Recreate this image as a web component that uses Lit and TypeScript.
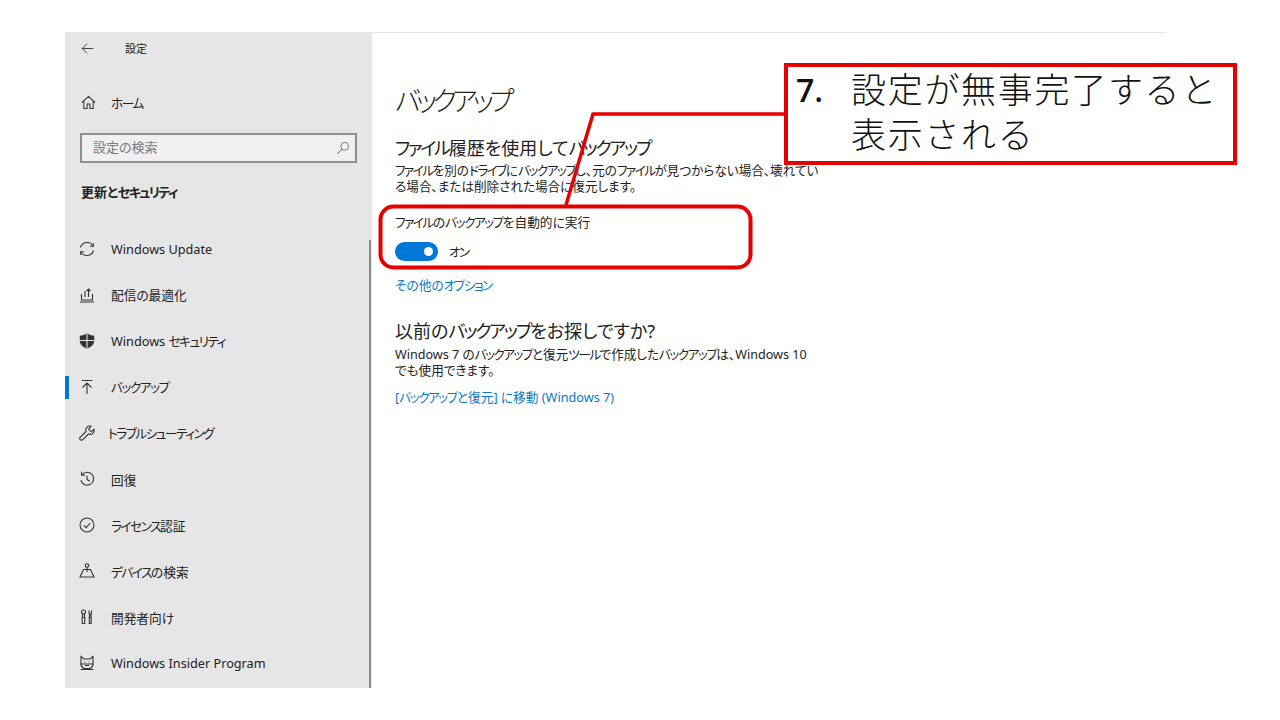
import { LitElement, html, css, svg } from 'lit';
import { customElement } from 'lit/decorators.js';

const icon = (body: unknown) => html`<svg class="icon" viewBox="0 0 16 16" fill="none" stroke="currentColor" stroke-width="1.1">${body}</svg>`;

// katakana runs are set tighter, the reference font has narrow kana
const k = (text: string) => html`<span class="kana">${text}</span>`;

const navItems = [
  { label: html`Windows Update`, icon: icon(svg`<path d="M1.5 6.5A6.8 6.8 0 0 1 14 5M14.5 9.5A6.8 6.8 0 0 1 2 11"/><path d="M14.3 2v3.2h-3.2M1.7 14v-3.2h3.2"/>`) },
  { label: html`配信の最適化`, icon: icon(svg`<path d="M2.5 7v6h11V7M1 15h14M6 4v6M9.5 2v8M7.5 4l2-2 2 2"/>`) },
  { label: html`Windows ${k('セキュリティ')}`, icon: icon(svg`<path fill="currentColor" stroke="none" d="M8 .3c2 1.4 4.700 2.200 7.200 2.400v5c0 3.800-3 6.300-7.200 7.800-4.200-1.500-7.200-4-7.200-7.800v-5C3.300 2.500 6 1.700 8 .3z"/><path stroke="#e6e6e6" d="M8 .3v15.200M.8 7.500h14.400"/>`) },
  { label: k('バックアップ'), active: true, icon: icon(svg`<path d="M3 1.500h10M8 15V4M3.500 8.500 8 4l4.500 4.500"/>`) },
  { label: k('トラブルシューティング'), tight: true, icon: icon(svg`<path d="M15 4.200 12.300 6.800 9.600 4.100 12 1.300a4 4 0 0 0-5 5.200L1.300 12.200a1.700 1.700 0 0 0 2.500 2.500L9.500 9a4 4 0 0 0 5.500-4.800z"/>`) },
  { label: html`回復`, icon: icon(svg`<path d="M3.200 3.500A6.500 6.500 0 1 1 1.800 9"/><path d="M2.600.8v3.300h3.300M8 4.500V8.500l2.800 1.800"/>`) },
  { label: html`${k('ライセンス')}認証`, icon: icon(svg`<circle cx="8" cy="8" r="7"/><path d="m4.800 8.300 2.300 2.300 4.200-4.600"/>`) },
  { label: html`${k('デバイス')}の検索`, icon: icon(svg`<circle cx="8" cy="2.500" r="1.700"/><path d="M8 4.200V9M4.500 6.500h7L15 14H1z"/>`) },
  { label: html`開発者向け`, icon: icon(svg`<circle cx="4.500" cy="3" r="2"/><path d="M3.500 5v3.500h2V5M3.200 8.500h2.600v6H3.200zM10 1.500v3l1.200 1 1.300-1v-3M10.500 5.500v3h1.500v-3M10.300 8.500h1.900v6h-1.900z"/>`) },
  { label: html`Windows Insider Program`, icon: icon(svg`<path d="M2 1.500 5 4h6l3-2.500V9a5 5 0 0 1-3 4.500H5A5 5 0 0 1 2 9z"/><path d="M1.500 9h13M1.500 14.500h13M5.500 7h.8M9.700 7h.8M6 10.500h4"/>`) },
];

@customElement('app-root')
export class AppRoot extends LitElement {
  static styles = css`
    :host {
      display: block;
      position: relative;
      width: 1280px;
      height: 720px;
      background: #fff;
      overflow: hidden;
      font-family: "Noto Sans", "Noto Sans CJK JP", sans-serif;
      font-feature-settings: "palt";
      color: #222;
    }

    .kana {
      letter-spacing: -0.12em;
    }

    .window {
      display: flex;
      width: 1101px;
      height: 656px;
      margin-left: 65px;
      padding-top: 32px;
    }

    .sidebar {
      position: relative;
      flex: none;
      width: 307px;
      height: 656px;
      background: #e6e6e6;
      font-size: 12.700px;
    }

    .scrollbar {
      position: absolute;
      right: 1px;
      top: 208px;
      bottom: 0;
      width: 2px;
      background: #8c8c8c;
    }

    .icon {
      flex: none;
      width: 16px;
      height: 16px;
      color: #333;
    }

    .back {
      display: flex;
      align-items: center;
      gap: 31px;
      height: 32px;
      padding-left: 16px;
      font-size: 11px;
    }

    .back .icon {
      width: 13px;
      height: 13px;
    }

    .home {
      display: flex;
      align-items: center;
      gap: 15px;
      height: 32px;
      margin-top: 22px;
      padding-left: 16px;
    }

    .home .icon {
      width: 15px;
      height: 15px;
    }

    .search {
      display: flex;
      align-items: center;
      justify-content: space-between;
      box-sizing: border-box;
      width: 277px;
      height: 30px;
      margin: 15px 0 0 15px;
      padding: 0 5px 3px 11px;
      border: 2px solid #8f8f8f;
      background: #f0f0f0;
      color: #7a7a7a;
      font-size: 13px;
    }

    .search .icon {
      width: 14px;
      height: 14px;
      margin-top: 3px;
      color: #777;
    }

    .section {
      height: 32px;
      margin: 13px 0 0 16px;
      line-height: 32px;
      font-size: 13px;
      font-weight: 700;
    }

    .nav {
      margin-top: 17.500px;
    }

    .item {
      position: relative;
      display: flex;
      align-items: center;
      gap: 16px;
      height: 46.100px;
      padding-left: 14px;
    }

    .item.tight {
      gap: 13px;
    }

    .item.active::before {
      content: "";
      position: absolute;
      left: 0;
      top: 12px;
      width: 4px;
      height: 23px;
      background: #0078d7;
    }

    .main {
      flex: 1;
      height: 656px;
      box-sizing: border-box;
      padding: 50px 0 0 23px;
      border-top: 1px solid #e6e6e6;
    }

    h1 {
      margin: 0;
      font-size: 27px;
      font-weight: 300;
      line-height: 36px;
    }

    h1 .kana {
      letter-spacing: -0.17em;
    }

    h2 {
      margin: 0;
      font-size: 18px;
      font-weight: 400;
      line-height: 24px;
    }

    .first {
      margin-top: 17px;
    }

    p {
      margin: 0;
      font-size: 12.600px;
      line-height: 16px;
    }

    .desc {
      margin-top: 3px;
    }

    .label {
      margin-top: 18px;
      font-size: 12.700px;
      line-height: 18px;
    }

    .toggle-row {
      display: flex;
      align-items: center;
      gap: 11px;
      height: 20px;
      margin-top: 10px;
      font-size: 12.500px;
    }

    .toggle {
      display: flex;
      align-items: center;
      justify-content: flex-end;
      box-sizing: border-box;
      width: 43px;
      height: 19px;
      padding-right: 5px;
      border-radius: 10px;
      background: #0078d7;
    }

    .knob {
      width: 9px;
      height: 9px;
      border-radius: 50%;
      background: #fff;
    }

    a {
      display: block;
      color: #0a78c8;
      text-decoration: none;
      font-size: 12.700px;
      line-height: 18px;
    }

    .more {
      margin-top: 15px;
    }

    .second {
      margin-top: 25px;
    }

    .note {
      margin-top: 4px;
    }

    .go {
      margin-top: 9px;
    }

    .overlay {
      position: absolute;
      left: 0;
      top: 0;
      width: 1280px;
      height: 720px;
      pointer-events: none;
    }

    .callout {
      position: absolute;
      left: 784px;
      top: 63px;
      box-sizing: border-box;
      display: flex;
      width: 453px;
      height: 102px;
      padding: 0 0 0 8px;
      border: 4px solid #e60000;
      background: #fff;
      font-size: 35px;
      line-height: 45px;
      color: #111;
      font-feature-settings: normal;
    }

    .num {
      flex: none;
      width: 55px;
      font-family: "Open Sans", sans-serif;
      font-weight: 600;
      font-size: 32px;
    }

    .text {
      letter-spacing: 1.700px;
      font-weight: 300;
      white-space: nowrap;
    }
  `;

  render() {
    return html`
      <div class="window">
        <aside class="sidebar">
          <div class="back">
            ${icon(svg`<path d="M15 8H1.500M7.500 2 1.500 8l6 6"/>`)}
            <span>設定</span>
          </div>
          <div class="home">
            ${icon(svg`<path d="M1 8 8 1.500 15 8M3 6.500V14.500h3.500V9.500h3v5H13V6.500"/>`)}
            ${k('ホーム')}
          </div>
          <div class="search">
            <span>設定の検索</span>
            ${icon(svg`<circle cx="10" cy="6" r="4.500"/><path d="M6.800 9.200 1.500 14.500"/>`)}
          </div>
          <div class="section">更新と${k('セキュリティ')}</div>
          <nav class="nav">
            ${navItems.map((item) => html`
              <div class="item ${item.active ? 'active' : ''} ${item.tight ? 'tight' : ''}">
                ${item.icon}
                <span>${item.label}</span>
              </div>
            `)}
          </nav>
          <div class="scrollbar"></div>
        </aside>

        <main class="main">
          <h1>${k('バックアップ')}</h1>
          <h2 class="first">${k('ファイル')}履歴を使用して${k('バックアップ')}</h2>
          <p class="desc">${k('ファイル')}を別の${k('ドライブ')}に${k('バックアップ')}し、元の${k('ファイル')}が見つからない場合、壊れてい<br />る場合、または削除された場合に復元します。</p>
          <div class="label">${k('ファイル')}の${k('バックアップ')}を自動的に実行</div>
          <div class="toggle-row">
            <div class="toggle"><div class="knob"></div></div>
            ${k('オン')}
          </div>
          <a class="more" href="#">その他の${k('オプション')}</a>
          <h2 class="second">以前の${k('バックアップ')}をお探しですか?</h2>
          <p class="note">Windows 7 の${k('バックアップ')}と復元${k('ツール')}で作成した${k('バックアップ')}は、Windows 10<br />でも使用できます。</p>
          <a class="go" href="#">[${k('バックアップ')}と復元] に移動 (Windows 7)</a>
        </main>
      </div>

      <svg class="overlay" viewBox="0 0 1280 720" fill="none" stroke="#e60000" stroke-width="3.500">
        <path d="M786 114H593L566 205"/>
        <rect x="380.500" y="206.500" width="370" height="61" rx="13" stroke-width="4"/>
      </svg>
      <div class="callout">
        <span class="num">7.</span>
        <span class="text">設定が無事完了すると<br />表示される</span>
      </div>
    `;
  }
}
